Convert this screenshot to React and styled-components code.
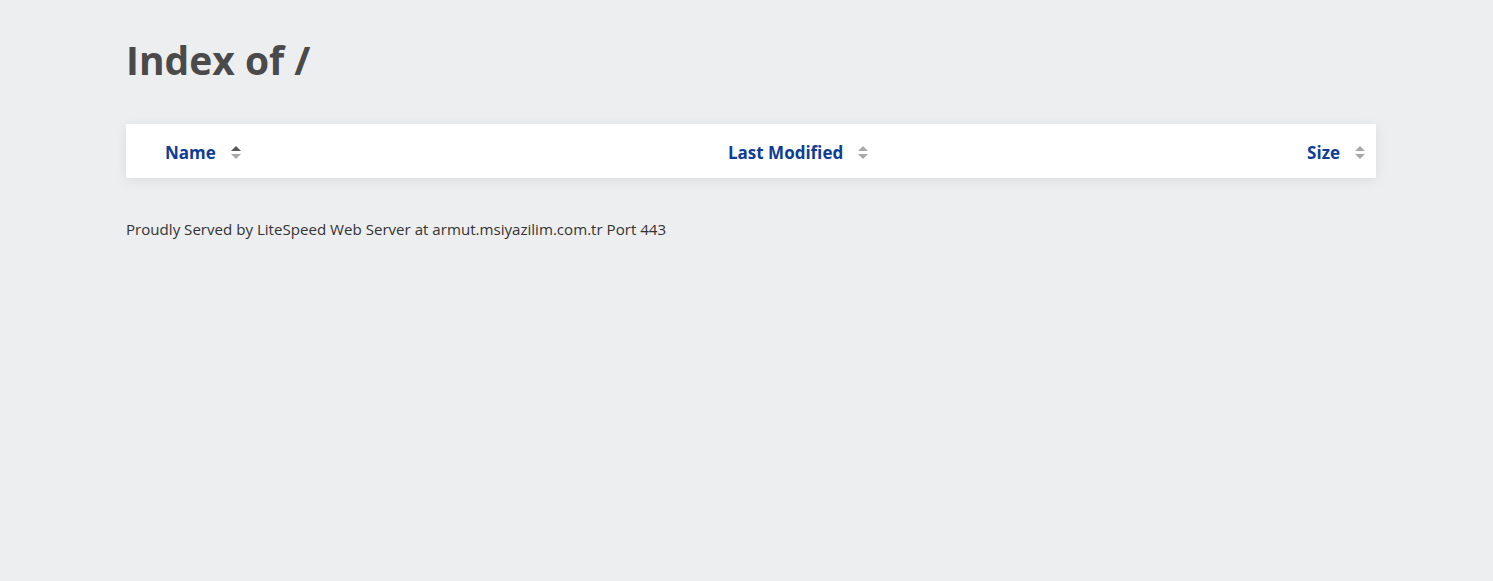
import React from 'react';
import styled, { createGlobalStyle } from 'styled-components';

const GlobalStyle = createGlobalStyle`
    html, body {
        margin: 0;
        padding: 0;
        background: #edeef0;
        font-family: "Open Sans", "Noto Sans", sans-serif;
        color: #333333;
    }
`;

const Page = styled.div`
    width: 1250px;
    padding: 29px 0 0 126px;
`;

const Title = styled.h1`
    margin: 0;
    font-size: 39px;
    font-weight: 700;
    color: #4a4a4a;
    line-height: 62px;
`;

const Table = styled.div`
    box-sizing: border-box;
    margin-top: 33px;
    height: 54px;
    background: #ffffff;
    box-shadow: 0 2px 12px rgba(0, 0, 0, 0.08);
    display: grid;
    grid-template-columns: 563px 1fr auto;
    align-items: center;
    padding: 3px 11px 0 39px;
`;

const HeadCell = styled.div`
    display: flex;
    align-items: center;
    justify-content: ${p => (p.$right ? 'flex-end' : 'flex-start')};
    gap: 15px;
    color: #0e3d97;
    font-size: 17px;
    font-weight: 700;
`;

const Arrows = ({ active }) => (
    <svg width="10" height="13" viewBox="0 0 10 13">
        <polygon points="0,5 5,0 10,5" fill={active ? '#585858' : '#a9a9a9'} />
        <polygon points="0,8 5,13 10,8" fill="#a9a9a9" />
    </svg>
);

const Footer = styled.p`
    margin: 41px 0 0;
    font-size: 15.1px;
    color: #333333;
`;

const App = () => {
    return (
        <Page>
            <GlobalStyle />
            <Title>Index of /</Title>
            <Table>
                <HeadCell>Name <Arrows active /></HeadCell>
                <HeadCell>Last Modified <Arrows /></HeadCell>
                <HeadCell $right>Size <Arrows /></HeadCell>
            </Table>
            <Footer>Proudly Served by LiteSpeed Web Server at armut.msiyazilim.com.tr Port 443</Footer>
        </Page>
    );
};

export default App;
